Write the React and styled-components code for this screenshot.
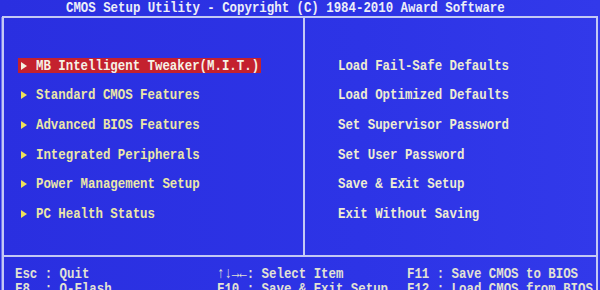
import styled, { createGlobalStyle } from 'styled-components';

const GlobalStyle = createGlobalStyle`
	html, body {
		margin: 0;
		padding: 0;
		background: #2b31e4;
	}
`

const Screen = styled.div`
	width: 600px;
	height: 290px;
	overflow: hidden;
	display: flex;
	flex-direction: column;
	background: linear-gradient(90deg, #2a2fe0 0%, #2d34e6 60%, #3239ea 100%);
	font-family: "Liberation Mono", "DejaVu Sans Mono", monospace;
	font-weight: bold;
	font-size: 12.4px;
`

const Text = styled.span`
	display: inline-block;
	white-space: pre;
	transform: scaleY(1.25);
	color: ${(p) => p.color || '#ecebd0'};
`

const TitleBar = styled.div`
	height: 19px;
	display: flex;
	align-items: center;
	padding: 1px 0 1px 66px;
	box-sizing: border-box;
	line-height: 14px;
`

const Frame = styled.div`
	margin-left: 2px;
	width: 592px;
	flex: 1;
	display: flex;
	flex-direction: column;
	border: 2px solid #c3c9f4;
	border-bottom: none;
	box-shadow: -2px 0 0 -1px #6f76ec;
`

const Main = styled.div`
	height: 237px;
	display: grid;
	grid-template-columns: 301px 1fr;
`

const Column = styled.div`
	display: flex;
	flex-direction: column;
	padding-top: 33px;
	padding-left: ${(p) => p.$pad}px;
	border-right: ${(p) => (p.$divider ? '2px solid #c3c9f4' : 'none')};
`

const Row = styled.div`
	height: 29.6px;
	display: flex;
	align-items: center;
`

const Item = styled.div`
	display: flex;
	align-items: center;
	height: 15px;
	padding-right: 2px;
	background: ${(p) => (p.$active ? '#c4212e' : 'transparent')};
`

const Arrow = styled.span`
	width: 0;
	height: 0;
	margin: 0 9px 0 3px;
	border-top: 4.5px solid transparent;
	border-bottom: 4.5px solid transparent;
	border-left: 6px solid ${(p) => (p.$active ? '#f4f0e0' : '#efe25a')};
`

const Footer = styled.div`
	flex: 1;
	border-top: 2px solid #c3c9f4;
	display: grid;
	grid-template-columns: 202px 190px 1fr;
	padding: 10px 0 0 11px;
`

const FooterCol = styled.div`
	display: flex;
	flex-direction: column;
	line-height: 15px;
`

const leftItems = [
	'MB Intelligent Tweaker(M.I.T.)',
	'Standard CMOS Features',
	'Advanced BIOS Features',
	'Integrated Peripherals',
	'Power Management Setup',
	'PC Health Status',
]

const rightItems = [
	'Load Fail-Safe Defaults',
	'Load Optimized Defaults',
	'Set Supervisor Password',
	'Set User Password',
	'Save & Exit Setup',
	'Exit Without Saving',
]

const footer = [
	['Esc : Quit', 'F8  : Q-Flash'],
	['\u2191\u2193\u2192\u2190: Select Item', 'F10 : Save & Exit Setup'],
	['F11 : Save CMOS to BIOS', 'F12 : Load CMOS from BIOS'],
]

const App = () => {
	return (
		<Screen>
			<GlobalStyle />
			<TitleBar>
				<Text color="#eceef8">CMOS Setup Utility - Copyright (C) 1984-2010 Award Software</Text>
			</TitleBar>
			<Frame>
				<Main>
					<Column $pad={14} $divider>
						{leftItems.map((label, i) => (
							<Row key={label}>
								<Item $active={i === 0}>
									<Arrow $active={i === 0} />
									<Text color={i === 0 ? '#f6f2e6' : '#ebe7a8'}>{label}</Text>
								</Item>
							</Row>
						))}
					</Column>
					<Column $pad={33}>
						{rightItems.map((label) => (
							<Row key={label}>
								<Text color="#eeecd2">{label}</Text>
							</Row>
						))}
					</Column>
				</Main>
				<Footer>
					{footer.map((col, i) => (
						<FooterCol key={i}>
							{col.map((line) => (
								<Text key={line} color="#e2e2d4">{line}</Text>
							))}
						</FooterCol>
					))}
				</Footer>
			</Frame>
		</Screen>
	)
}

export default App;
